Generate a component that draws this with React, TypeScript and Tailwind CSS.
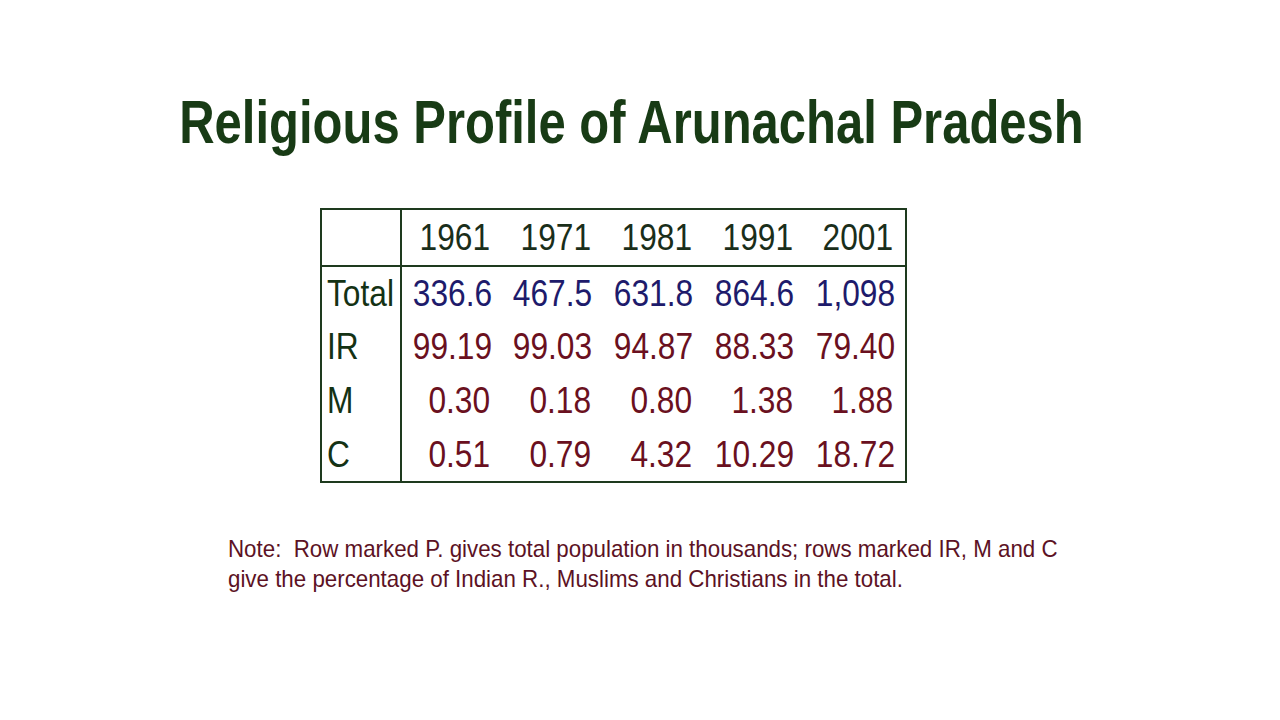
const years = ["1961", "1971", "1981", "1991", "2001"];

const rows = [
  { label: "Total", values: ["336.6", "467.5", "631.8", "864.6", "1,098"], color: "text-[#1e1b6b]" },
  { label: "IR", values: ["99.19", "99.03", "94.87", "88.33", "79.40"], color: "text-[#6a1020]" },
  { label: "M", values: ["0.30", "0.18", "0.80", "1.38", "1.88"], color: "text-[#6a1020]" },
  { label: "C", values: ["0.51", "0.79", "4.32", "10.29", "18.72"], color: "text-[#6a1020]" },
];

// no narrow face installed, so the condensed look comes from a horizontal squeeze
function Narrow({ children, origin = "origin-left", amount = "scale-x-[0.88]" }: { children: React.ReactNode; origin?: string; amount?: string }) {
  return <span className={`inline-block whitespace-nowrap ${origin} ${amount}`}>{children}</span>;
}

export default function App() {
  return (
    <main
      className="flex h-[720px] w-[1280px] flex-col items-center overflow-hidden bg-white"
      style={{ fontFamily: '"Liberation Sans", Arial, sans-serif' }}
    >
      <h1 className="ml-[-17px] mt-[86px] text-[62px] font-bold leading-[72px] text-[#183b15]">
        <Narrow origin="origin-center" amount="scale-x-[0.79]">Religious Profile of Arunachal Pradesh</Narrow>
      </h1>

      <table className="ml-[-53px] mt-[50px] w-[585px] table-fixed border-collapse border-2 border-[#1e3a1e]">
        <colgroup>
          <col className="w-[80px]" />
          {years.map((y) => (
            <col key={y} className="w-[101px]" />
          ))}
        </colgroup>
        <thead>
          <tr className="h-[57px] border-b-2 border-[#1e3a1e]">
            <th className="border-r-2 border-[#1e3a1e]" />
            {years.map((y) => (
              <th key={y} className="pr-[12px] text-right text-[36px] font-normal text-[#1a2e1a]">
                <Narrow origin="origin-right">{y}</Narrow>
              </th>
            ))}
          </tr>
        </thead>
        <tbody>
          {rows.map((r) => (
            <tr key={r.label} className="h-[54px]">
              <td className="border-r-2 border-[#1e3a1e] pl-[5px] text-[36px] leading-none text-[#143214]">
                <Narrow>{r.label}</Narrow>
              </td>
              {r.values.map((v, i) => (
                <td key={i} className={`pr-[12px] text-right text-[36px] leading-none ${r.color}`}>
                  <Narrow origin="origin-right">{v}</Narrow>
                </td>
              ))}
            </tr>
          ))}
        </tbody>
      </table>

      <div className="mt-[51px] w-full pl-[228px] text-[24px] leading-[30px] text-[#5c1224]">
        <Narrow amount="scale-x-[0.93]">Note:&nbsp; Row marked P. gives total population in thousands; rows marked IR, M and C</Narrow>
        <br />
        <Narrow amount="scale-x-[0.93]">give the percentage of Indian R., Muslims and Christians in the total.</Narrow>
      </div>
    </main>
  );
}
